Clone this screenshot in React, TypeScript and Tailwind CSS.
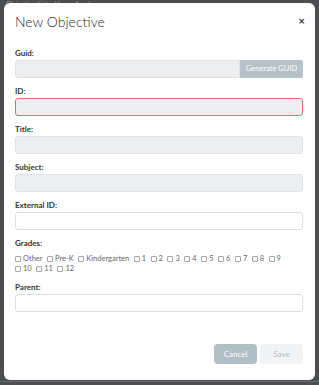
import { useState } from 'react';

const grades = ['Other', 'Pre-K', 'Kindergarten', '1', '2', '3', '4', '5', '6', '7', '8', '9', '10', '11', '12'];

function Field({ label, children }: { label: string; children: React.ReactNode }) {
  return (
    <div className="mb-[8px]">
      <div className="h-[10px] mb-[2px] text-[8px] leading-[10px] font-bold text-[#333]">{label}</div>
      {children}
    </div>
  );
}

export default function App() {
  const [checked, setChecked] = useState<Record<string, boolean>>({});

  return (
    <div
      className="relative w-[319px] h-[385px] overflow-hidden bg-[#4b4d50]"
      style={{ fontFamily: 'Lato, "Open Sans", sans-serif' }}
    >
      {/* page behind the overlay */}
      <div className="pl-[6px] text-[7px] leading-[8px] text-[#9a9da1]">Objective List - Home Academy</div>
      <div className="absolute bottom-0 left-0 right-0 h-[4px] border-t border-[#6a6d70]" />

      <div className="absolute left-[4px] top-[3px] w-[311px] h-[377px] bg-white rounded-[6px] flex flex-col pl-[11px] pr-[12px]">
        <div className="flex items-start justify-between pt-[10px]">
          <h2 className="text-[14px] leading-[18px] text-[#1f1f1f] font-light">New Objective</h2>
          <button className="mt-[2px] mr-[-2px] text-[11px] leading-[12px] font-bold text-[#333]">×</button>
        </div>

        <div className="mt-[17px]">
          <Field label="Guid:">
            <div className="flex h-[18px]">
              <div className="flex-1 bg-[#eceef0] border border-[#dfe2e5] rounded-l-[3px]" />
              <button className="w-[63px] bg-[#b6c2c9] text-white text-[7.5px] rounded-r-[2px]">Generate GUID</button>
            </div>
          </Field>
          <Field label="ID:">
            <div className="h-[18px] bg-[#eceef0] border border-[#e86a6a] rounded-[3px]" />
          </Field>
          <Field label="Title:">
            <div className="h-[18px] bg-[#eceef0] border border-[#dfe2e5] rounded-[3px]" />
          </Field>
          <Field label="Subject:">
            <div className="h-[18px] bg-[#eceef0] border border-[#dfe2e5] rounded-[3px]" />
          </Field>
          <Field label="External ID:">
            <div className="h-[18px] bg-white border border-[#dcdfe2] rounded-[3px]" />
          </Field>
          <Field label="Grades:">
            <div className="flex flex-wrap mt-[6px] mb-[2px]">
              {grades.map((g) => (
                <label
                  key={g}
                  className="flex items-center h-[10px] mr-[4.5px] text-[7.5px] leading-[10px] text-[#666]"
                  onClick={() => setChecked({ ...checked, [g]: !checked[g] })}
                >
                  <span className="w-[6px] h-[6px] border border-[#a5a5a5] rounded-[1px] bg-white mr-[2px]">
                    {checked[g] && <span className="block w-full h-full bg-[#888]" />}
                  </span>
                  {g}
                </label>
              ))}
            </div>
          </Field>
          <Field label="Parent:">
            <div className="h-[18px] bg-white border border-[#dcdfe2] rounded-[3px]" />
          </Field>
        </div>

        <div className="mt-auto mb-[16px] flex justify-end gap-[3px]">
          <button className="w-[43px] h-[20px] rounded-[4px] bg-[#b0bec5] text-white text-[8px]">Cancel</button>
          <button className="w-[43px] h-[20px] rounded-[4px] bg-[#f2f3f4] text-[#b5b9bd] text-[8px]">Save</button>
        </div>
      </div>
    </div>
  );
}
